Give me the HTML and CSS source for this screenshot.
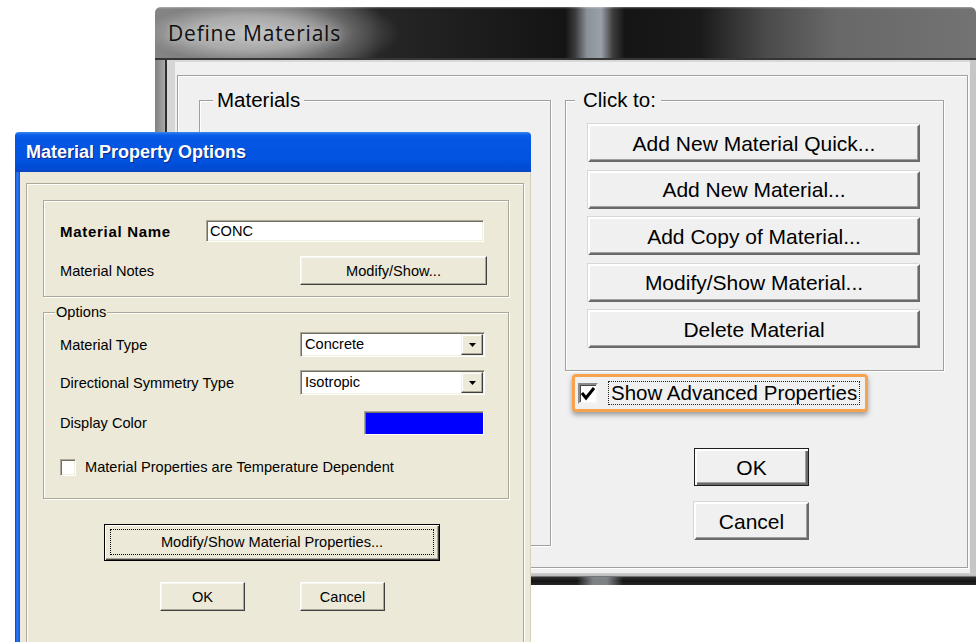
FILE: index.html
```html
<!DOCTYPE html>
<html lang="en">
<head>
<meta charset="utf-8">
<title>Define Materials</title>
<link rel="stylesheet" href="styles.css">
</head>
<body>
<div class="desk">

  <!-- Main dialog: Define Materials -->
  <section class="win7">
    <header class="win7-title"><span class="win7-caption">Define Materials</span></header>
    <div class="win7-body">
      <div class="win7-client">
        <div class="panel">
          <fieldset class="grp grp-materials">
            <legend>Materials</legend>
          </fieldset>

          <div class="side">
            <fieldset class="grp grp-click">
              <legend>Click to:</legend>
              <div class="btn-stack">
                <button class="btn7 wide">Add New Material Quick...</button>
                <button class="btn7 wide">Add New Material...</button>
                <button class="btn7 wide">Add Copy of Material...</button>
                <button class="btn7 wide">Modify/Show Material...</button>
                <button class="btn7 wide">Delete Material</button>
              </div>
            </fieldset>

            <label class="adv">
              <span class="chk7">
                <svg width="16" height="17" viewBox="0 0 16 17"><polyline points="2,8 6,13 14,3" fill="none" stroke="#000" stroke-width="3"/></svg>
              </span>
              <span class="focus">Show Advanced Properties</span>
            </label>

            <button class="btn7 small default ok">OK</button>
            <button class="btn7 small cancel">Cancel</button>
          </div>
        </div>
      </div>
    </div>
    <div class="win7-bottom"></div>
  </section>

  <!-- Child dialog: Material Property Options -->
  <section class="xp">
    <header class="xp-title">Material Property Options</header>
    <div class="xp-body">
      <div class="xp-panel">

        <div class="xp-grp">
          <div class="xp-row r-name">
            <span class="lbl-bold">Material Name</span>
            <span class="xp-input">CONC</span>
          </div>
          <div class="xp-row r-notes">
            <span>Material Notes</span>
            <button class="xp-btn notes">Modify/Show...</button>
          </div>
        </div>

        <fieldset class="xp-opts">
          <legend>Options</legend>
          <div class="xp-row r-type">
            <span>Material Type</span>
            <span class="xp-combo">
              <span class="combo-text">Concrete</span>
              <span class="combo-arrow"><svg width="7" height="4" viewBox="0 0 7 4"><path d="M0 0h7L3.5 4z" fill="#000"/></svg></span>
            </span>
          </div>
          <div class="xp-row r-sym">
            <span>Directional Symmetry Type</span>
            <span class="xp-combo">
              <span class="combo-text">Isotropic</span>
              <span class="combo-arrow"><svg width="7" height="4" viewBox="0 0 7 4"><path d="M0 0h7L3.5 4z" fill="#000"/></svg></span>
            </span>
          </div>
          <div class="xp-row r-color">
            <span>Display Color</span>
            <span class="swatch"></span>
          </div>
          <label class="xp-row r-temp">
            <span class="xp-chk"></span>
            <span>Material Properties are Temperature Dependent</span>
          </label>
        </fieldset>

        <button class="xp-btn default props"><span class="focus-ring">Modify/Show Material Properties...</span></button>

        <div class="xp-actions">
          <button class="xp-btn small">OK</button>
          <button class="xp-btn small">Cancel</button>
        </div>

      </div>
    </div>
  </section>

</div>
</body>
</html>
```

FILE: styles.css
```css
* { box-sizing: border-box; }

html, body {
  margin: 0;
  padding: 0;
  background: #fff;
}

body {
  width: 976px;
  height: 642px;
  overflow: hidden;
  font-family: "Liberation Sans", Arial, sans-serif;
  color: #000;
}

.desk {
  position: relative;
  width: 976px;
  height: 642px;
  overflow: hidden;
  background: #fff;
}

button { font: inherit; color: #000; padding: 0; margin: 0; cursor: default; }

/* ---------- Define Materials (Windows 7 basic frame) ---------- */

.win7 {
  position: absolute;
  left: 155px;
  top: 7px;
  width: 821px;
  height: 578px;
  display: flex;
  flex-direction: column;
  border-radius: 6px 6px 0 0;
  overflow: hidden;
  background: #c6c6c6;
}

.win7-title {
  flex: none;
  height: 53px;
  padding-left: 13px;
  display: flex;
  align-items: center;
  border-bottom: 2px solid #353535;
  background:
    linear-gradient(to bottom, rgba(255,255,255,.35) 0, rgba(255,255,255,0) 2px),
    radial-gradient(ellipse 150px 42px at 95px 26px, rgba(196,196,196,.95) 0%, rgba(178,178,178,.85) 40%, rgba(130,130,130,.5) 70%, rgba(60,60,60,0) 100%),
    linear-gradient(90deg, #868686 0, #6a6a6a 140px, #262626 225px, #141414 410px, #3a3a3a 420px, #8c929a 432px, #9aa0a8 446px, #3c3c3c 458px, #151515 470px, #1a1a1a 545px, #4a4a4a 610px, #686868 680px, #737373 821px);
}

.win7-caption {
  font-family: "Open Sans", "Noto Sans", sans-serif;
  font-size: 21px;
  letter-spacing: 0.8px;
  color: #101010;
  text-shadow: 0 0 6px rgba(225,225,225,.6);
}

.win7-body {
  flex: 1;
  display: flex;
  padding: 0 6px 0 10px;
  background: linear-gradient(90deg, #808080 0, #a8a8a8 10px, #c6c6c6 10px);
}

.win7-client {
  flex: 1;
  display: flex;
  flex-direction: column;
  border-left: 2px solid #2e2e2e;
  padding: 15px 2px 5px 10px;
  background: linear-gradient(90deg, #d6d6d6 0, #d6d6d6 8px, #f0f0f0 8px);
  box-shadow: inset 0 2px 0 #d8d8d8;
}

.win7-bottom {
  flex: none;
  height: 12px;
  background:
    linear-gradient(90deg, transparent 422px, rgba(150,155,160,.8) 438px, rgba(150,155,160,.8) 452px, transparent 468px) 0 100% / 100% 8px no-repeat,
    linear-gradient(to bottom, #d0d0d0 0, #bcbcbc 3px, #2e2e2e 4px, #141414 8px, #262626 12px);
}

.panel {
  flex: 1;
  display: flex;
  align-items: flex-start;
  padding: 12px 0 0 21px;
  border: 1px solid #a0a0a0;
  box-shadow: inset 1px 1px 0 #fff, 1px 1px 0 #fff;
  background: #f0f0f0;
}

.grp {
  margin: 0;
  padding: 0;
  min-width: 0;
  border: 1px solid #a0a0a0;
  box-shadow: inset 1px 1px 0 #fff, 1px 1px 0 #fff;
}

.grp > legend {
  font-size: 20.5px;
  line-height: 24px;
  padding: 0 4px;
  margin-left: 13px;
  background: #f0f0f0;
}

.grp-materials {
  width: 352px;
  height: 458px;
}

.side {
  margin-left: 14px;
  width: 379px;
  display: flex;
  flex-direction: column;
  align-items: flex-start;
}

.grp-click {
  width: 379px;
  height: 283px;
  padding: 12px 22px 0;
}

.grp-click > legend {
  margin-left: -13px;
  padding: 0 5px 0 8px;
}

.btn-stack {
  display: flex;
  flex-direction: column;
  gap: 8.5px;
}

.btn7 {
  display: flex;
  align-items: center;
  justify-content: center;
  font-size: 21px;
  line-height: 1;
  background: #f0f0f0;
  border: 2px solid;
  border-color: #fff #6a6a6a #6a6a6a #fff;
  box-shadow: inset -1px -1px 0 #a0a0a0, -1px -1px 0 #d8d8d8;
}

.btn7.wide { width: 332px; height: 38px; }
.btn7.small { width: 115px; height: 38px; }

.btn7.default {
  border: 1px solid #1e1e1e;
  box-shadow: inset 1px 1px 0 #fff, inset 2px 2px 0 #fff, inset -1px -1px 0 #6a6a6a, inset -2px -2px 0 #6a6a6a, inset -3px -3px 0 #a0a0a0;
}

.ok { margin: 36px 0 0 129px; }
.cancel { margin: 16px 0 0 129px; }

/* highlighted "Show Advanced Properties" option */
.adv {
  margin: 3px 0 0 7px;
  width: 296px;
  height: 38px;
  padding: 0 3px;
  display: flex;
  align-items: center;
  gap: 10px;
  border: 3px solid #f6a24f;
  border-radius: 4px;
  background: #f0f0f0;
  box-shadow: 0 3px 5px rgba(0,0,0,.35);
}

.chk7 {
  flex: none;
  width: 20px;
  height: 21px;
  display: flex;
  align-items: center;
  justify-content: center;
  background: #fff;
  border: 2px solid;
  border-color: #8a8a8a #f4f4f4 #f4f4f4 #8a8a8a;
  box-shadow: inset 1px 1px 0 #4a4a4a;
}

.chk7 svg { display: block; }

.focus {
  font-size: 20.5px;
  line-height: 22px;
  padding: 0 2px;
  border: 1px dotted #222;
  white-space: nowrap;
}

/* ---------- Material Property Options (XP frame) ---------- */

.xp {
  position: absolute;
  left: 15px;
  top: 132px;
  width: 516px;
  height: 520px;
  display: flex;
  flex-direction: column;
  font-size: 14.6px;
}

.xp-title {
  flex: none;
  height: 40px;
  padding-left: 11px;
  display: flex;
  align-items: center;
  border-radius: 4px 4px 0 0;
  font-size: 18px;
  font-weight: bold;
  color: #fff;
  text-shadow: 1px 1px 0 #0b2a8a;
  background: linear-gradient(to bottom, #3a86f4 0, #0a5ee8 3px, #0556e3 20%, #0253df 70%, #004bd4 90%, #0a45c4 100%);
}

.xp-body {
  flex: 1;
  padding-left: 5px;
  border-right: 1px solid #d4d0c0;
  background: linear-gradient(90deg, #0a3bcc 0, #2f7cf2 2px, #1763e8 4px, #0b4fd6 5px, #ece9d8 5px);
}

.xp-panel {
  margin: 11px 6px 0 6px;
  padding: 16px 15px 40px 16px;
  display: flex;
  flex-direction: column;
  align-items: flex-start;
  border: 1px solid #aca899;
  box-shadow: inset 1px 1px 0 #fff, 1px 1px 0 #fff;
}

.xp-grp {
  width: 466px;
  height: 97px;
  padding: 19px 21px 0 16px;
  border: 1px solid #aca899;
  box-shadow: inset 1px 1px 0 #fff, 1px 1px 0 #fff;
}

.xp-row {
  display: flex;
  align-items: center;
  justify-content: space-between;
  white-space: nowrap;
}

.lbl-bold {
  font-weight: bold;
  font-size: 15px;
  letter-spacing: 0.7px;
}

.r-name { height: 22px; }
.r-notes { margin-top: 14px; height: 29px; }

.xp-input {
  width: 278px;
  height: 22px;
  margin-right: 3px;
  padding: 0 3px;
  line-height: 20px;
  background: #fff;
  border: 1px solid;
  border-color: #aca899 #fff #fff #aca899;
  box-shadow: inset 1px 1px 0 #716f64, inset -1px -1px 0 #f1efe2;
}

.xp-btn {
  display: flex;
  align-items: center;
  justify-content: center;
  background: #ece9d8;
  border: 1px solid;
  border-color: #fff #404040 #404040 #fff;
  box-shadow: inset -1px -1px 0 #aca899, inset 1px 1px 0 #f7f6f0;
}

.xp-btn.notes { width: 187px; height: 29px; }

.xp-opts {
  margin: 6px 0 0;
  width: 466px;
  min-width: 0;
  padding: 0 23px 21px 16px;
  border: 1px solid #aca899;
  box-shadow: inset 1px 1px 0 #fff, 1px 1px 0 #fff;
}

.xp-opts > legend {
  margin-left: -5px;
  padding: 0 1px;
  line-height: 18px;
  background: #ece9d8;
}

.r-type { margin-top: 11px; height: 25px; }
.r-sym { margin-top: 13px; height: 25px; }
.r-color { margin-top: 16px; height: 24px; }
.r-temp { margin-top: 22px; height: 20px; justify-content: flex-start; gap: 9px; }

.xp-combo {
  width: 185px;
  height: 25px;
  padding: 1px;
  display: flex;
  background: #fff;
  border: 1px solid;
  border-color: #aca899 #fff #fff #aca899;
  box-shadow: inset 1px 1px 0 #716f64, inset -1px -1px 0 #f1efe2;
}

.combo-text {
  flex: 1;
  padding-left: 3px;
  line-height: 21px;
}

.combo-arrow {
  width: 22px;
  height: 21px;
  display: flex;
  align-items: center;
  justify-content: center;
  background: #ece9d8;
  border: 1px solid;
  border-color: #f1efe2 #404040 #404040 #f1efe2;
  box-shadow: inset -1px -1px 0 #aca899, inset 1px 1px 0 #fff;
}

.combo-arrow svg { display: block; }

.swatch {
  width: 120px;
  height: 24px;
  margin-right: 1px;
  background: #0000ff;
  border: 1px solid;
  border-color: #aca899 #fff #fff #aca899;
  box-shadow: inset 1px 1px 0 #716f64;
}

.xp-chk {
  flex: none;
  width: 16px;
  height: 17px;
  background: #fff;
  border: 1px solid;
  border-color: #aca899 #fff #fff #aca899;
  box-shadow: inset 1px 1px 0 #716f64, inset -1px -1px 0 #f1efe2;
}

.xp-btn.default {
  margin: 25px 0 0 61px;
  width: 336px;
  height: 37px;
  padding: 4px 5px 5px;
  border: 1px solid #000;
  box-shadow: inset 1px 1px 0 #fff, inset -1px -1px 0 #404040, inset -2px -2px 0 #aca899;
}

.focus-ring {
  width: 100%;
  height: 100%;
  display: flex;
  align-items: center;
  justify-content: center;
  border: 1px dotted #000;
}

.xp-actions {
  margin: 21px 0 0 117px;
  display: flex;
  gap: 55px;
}

.xp-btn.small { width: 85px; height: 29px; }
```
